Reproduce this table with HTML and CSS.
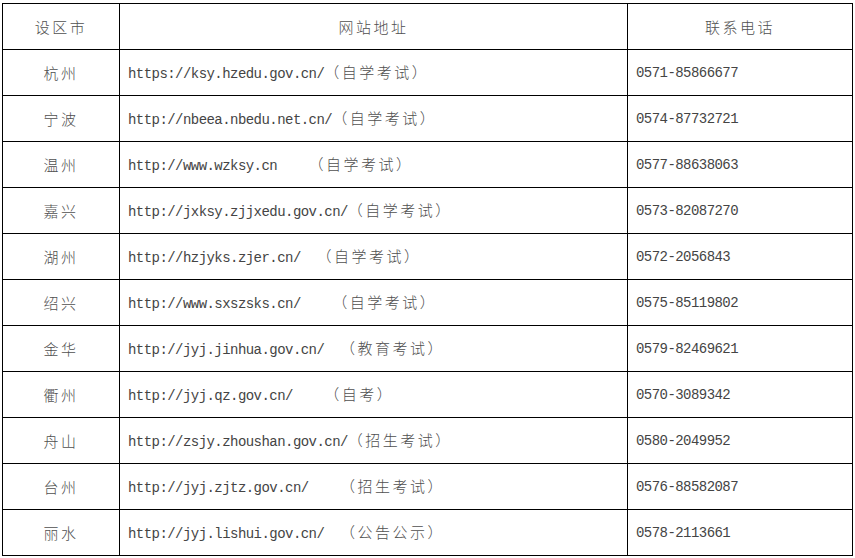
FILE: index.html
```html
<!DOCTYPE html>
<html lang="zh-CN">
<head>
<meta charset="utf-8">
<title>设区市 网站地址 联系电话</title>
<link rel="stylesheet" href="styles.css">
</head>
<body>
<div class="wrap">
<table class="contacts">
<colgroup><col class="c-city"><col class="c-url"><col class="c-tel"></colgroup>
<thead>
<tr><th class="zh">设区市</th><th class="zh">网站地址</th><th class="zh">联系电话</th></tr>
</thead>
<tbody>
<tr><td class="city zh">杭州</td><td class="url">https://ksy.hzedu.gov.cn/<span class="zh">（自学考试）</span></td><td class="tel">0571-85866677</td></tr>
<tr><td class="city zh">宁波</td><td class="url">http://nbeea.nbedu.net.cn/<span class="zh">（自学考试）</span></td><td class="tel">0574-87732721</td></tr>
<tr><td class="city zh">温州</td><td class="url">http://www.wzksy.cn    <span class="zh">（自学考试）</span></td><td class="tel">0577-88638063</td></tr>
<tr><td class="city zh">嘉兴</td><td class="url">http://jxksy.zjjxedu.gov.cn/<span class="zh">（自学考试）</span></td><td class="tel">0573-82087270</td></tr>
<tr><td class="city zh">湖州</td><td class="url">http://hzjyks.zjer.cn/  <span class="zh">（自学考试）</span></td><td class="tel">0572-2056843</td></tr>
<tr><td class="city zh">绍兴</td><td class="url">http://www.sxszsks.cn/    <span class="zh">（自学考试）</span></td><td class="tel">0575-85119802</td></tr>
<tr><td class="city zh">金华</td><td class="url">http://jyj.jinhua.gov.cn/  <span class="zh">（教育考试）</span></td><td class="tel">0579-82469621</td></tr>
<tr><td class="city zh">衢州</td><td class="url">http://jyj.qz.gov.cn/    <span class="zh">（自考）</span></td><td class="tel">0570-3089342</td></tr>
<tr><td class="city zh">舟山</td><td class="url">http://zsjy.zhoushan.gov.cn/<span class="zh">（招生考试）</span></td><td class="tel">0580-2049952</td></tr>
<tr><td class="city zh">台州</td><td class="url">http://jyj.zjtz.gov.cn/    <span class="zh">（招生考试）</span></td><td class="tel">0576-88582087</td></tr>
<tr><td class="city zh">丽水</td><td class="url">http://jyj.lishui.gov.cn/  <span class="zh">（公告公示）</span></td><td class="tel">0578-2113661</td></tr>
</tbody>
</table>
</div>
</body>
</html>
```

FILE: styles.css
```css
html, body {
  margin: 0;
  padding: 0;
  background: #ffffff;
}
.wrap {
  padding: 3px 0 0 2px;
}
.contacts {
  border-collapse: collapse;
  table-layout: fixed;
  width: 850px;
  color: #444444;
  font-family: "Liberation Mono", monospace;
  font-size: 14px;
  letter-spacing: -0.55px;
}
.c-city { width: 117px; }
.c-url { width: 508px; }
.c-tel { width: 225px; }
.contacts tr {
  height: 46px;
}
.contacts th,
.contacts td {
  border: 1px solid #000;
  padding: 0 8px;
  vertical-align: middle;
  white-space: pre;
  font-weight: normal;
  line-height: 20px;
}
.contacts th {
  text-align: center;
}
.contacts td.city {
  text-align: center;
}
.contacts td.url,
.contacts td.tel {
  text-align: left;
}
.zh {
  font-family: "Noto Sans CJK SC", sans-serif;
  font-size: 15px;
  font-weight: 300;
  color: #505050;
  letter-spacing: 2.5px;
}
.contacts th.zh,
.contacts td.city {
  font-weight: 300;
  letter-spacing: 2.5px;
}
```
